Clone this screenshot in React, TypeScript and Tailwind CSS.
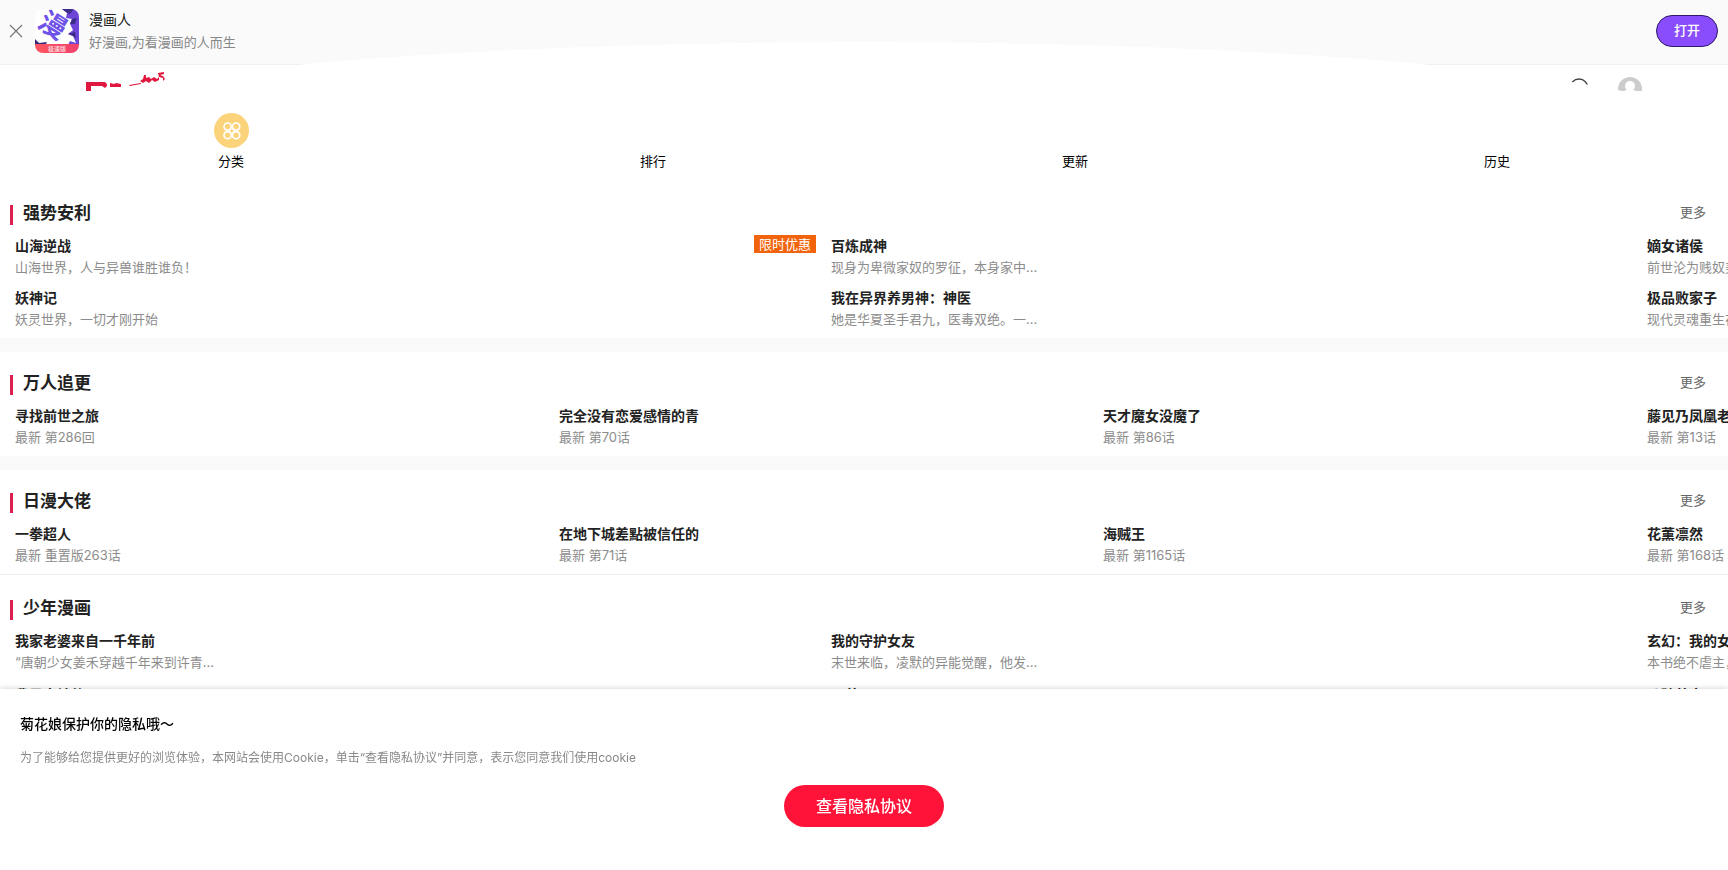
type Comic = { title: string; desc: string; badge?: string }
type Section = { name: string; comics: Comic[]; rows: 1 | 2; divider: 'thick' | 'thin' | 'none' }

const sections: Section[] = [
  {
    name: '强势安利',
    rows: 2,
    divider: 'thick',
    comics: [
      { title: '山海逆战', desc: '山海世界，人与异兽谁胜谁负！', badge: '限时优惠' },
      { title: '妖神记', desc: '妖灵世界，一切才刚开始' },
      { title: '百炼成神', desc: '现身为卑微家奴的罗征，本身家中...' },
      { title: '我在异界养男神：神医', desc: '她是华夏圣手君九，医毒双绝。一...' },
      { title: '嫡女诸侯', desc: '前世沦为贱奴美人' },
      { title: '极品败家子', desc: '现代灵魂重生在古代' },
    ],
  },
  {
    name: '万人追更',
    rows: 1,
    divider: 'thick',
    comics: [
      { title: '寻找前世之旅', desc: '最新 第286回' },
      { title: '完全没有恋爱感情的青', desc: '最新 第70话' },
      { title: '天才魔女没魔了', desc: '最新 第86话' },
      { title: '藤见乃凤凰老师', desc: '最新 第13话' },
    ],
  },
  {
    name: '日漫大佬',
    rows: 1,
    divider: 'thin',
    comics: [
      { title: '一拳超人', desc: '最新 重置版263话' },
      { title: '在地下城差點被信任的', desc: '最新 第71话' },
      { title: '海贼王', desc: '最新 第1165话' },
      { title: '花薰凛然', desc: '最新 第168话' },
    ],
  },
  {
    name: '少年漫画',
    rows: 2,
    divider: 'none',
    comics: [
      { title: '我家老婆来自一千年前', desc: '“唐朝少女姜禾穿越千年来到许青...' },
      { title: '我是大神仙', desc: '最新 第70话' },
      { title: '我的守护女友', desc: '末世来临，凌默的异能觉醒，他发...' },
      { title: '元尊', desc: '最新 第86话' },
      { title: '玄幻：我的女徒弟', desc: '本书绝不虐主，轻松' },
      { title: '斗破苍穹', desc: '最新 第13话' },
    ],
  },
]

const navItems = ['分类', '排行', '更新', '历史']

function AppIcon() {
  return (
    <svg viewBox="0 0 44 44" className="h-11 w-11 shrink-0">
      <defs>
        <clipPath id="app-clip"><rect width="44" height="44" rx="8" /></clipPath>
        <linearGradient id="app-strip" x1="0" x2="1">
          <stop offset="0" stopColor="#fb5660" />
          <stop offset="1" stopColor="#f0406e" />
        </linearGradient>
      </defs>
      <g clipPath="url(#app-clip)">
        <rect width="44" height="44" fill="#fff" />
        <path d="M27 0H44V36H33L35 32 41 34 38 27 33 25 38 21 35 15 37 10 31 9 32 4Z" fill="#6d45d8" />
        <path d="M27 0H39L35 5 31 3ZM33 25 40 23 41 29 38 27ZM37 10 42 9 40 15 35 15Z" fill="#3c2c85" />
        <path d="M0 30 4 34 12 33 10 37H0Z" fill="#37277b" />
        <text x="18" y="26" fontSize="27" fontWeight="700" fill="#6f52e8" textAnchor="middle" transform="rotate(32 18 16)">漫</text>
        <rect y="35" width="44" height="9" fill="url(#app-strip)" />
        <text x="22" y="42" fontSize="6" fontWeight="500" fill="#ffe3e6" textAnchor="middle">极速版</text>
      </g>
    </svg>
  )
}

function SiteLogo() {
  return (
    <svg viewBox="0 0 80 26" className="h-[26px] w-20" fill="#e0183f">
      <path d="M0 11H18Q21 11 21 15L19 17 16 15H5V20H0ZM24 12 28 13 30 12 35 13V16H24Z" />
      <path d="M43 14 55 12 55 13 44 15Z" />
      <path d="M54 10 57 8 58 4 60 4 60 7 63 6 65 8 68 6 71 8 73 6 73 9 69 11 66 9 63 12 60 10 57 12Z" />
      <path d="M72 2 78 1 78 3 74 4 77 5 79 8 77 10 77 7 73 6Z" />
    </svg>
  )
}

function CategoryIcon() {
  return (
    <svg viewBox="0 0 36 36" className="h-full w-full">
      <circle cx="18" cy="18" r="18" fill="#fbd37a" />
      <g fill="none" stroke="#fff" strokeWidth="1.7">
        <circle cx="14" cy="14" r="3.7" />
        <circle cx="22.8" cy="14" r="3.7" />
        <circle cx="14" cy="22.8" r="3.7" />
        <circle cx="22.8" cy="22.8" r="3.7" />
        <path d="M18.4 15.8 21 18.4 18.4 21 15.8 18.4Z" strokeWidth="1" />
      </g>
    </svg>
  )
}

function AppBanner() {
  return (
    <div className="flex h-[65px] items-center border-b border-[#f0f0f0] bg-[#fafafa] px-2.5 pb-0.5">
      <button aria-label="关闭" className="mr-[13px] w-3">
        <svg viewBox="0 0 12 12" className="h-3 w-3 overflow-visible" stroke="#777" strokeWidth="1.2">
          <path d="M0 0 12 12M12 0 0 12" />
        </svg>
      </button>
      <AppIcon />
      <div className="ml-2.5 flex-1 leading-[23px]">
        <p className="text-sm leading-[23px] text-[#222]">漫画人</p>
        <p className="text-[13px] text-[#888]">好漫画,为看漫画的人而生</p>
      </div>
      <button className="h-8 w-[62px] rounded-full border border-[#301a66] bg-[#8a4dfd] text-[13px] font-medium text-white">
        打开
      </button>
    </div>
  )
}

function Header() {
  return (
    <header className="h-12 px-[5%]">
      <div className="flex h-[26px] items-start justify-between overflow-hidden pt-1.5">
        <a href="#" aria-label="首页"><SiteLogo /></a>
        <div className="flex gap-7 pt-1.5">
          <a href="#" aria-label="搜索">
            <svg viewBox="0 0 24 24" className="h-6 w-6" fill="none" stroke="#444" strokeWidth="1.4">
              <circle cx="13" cy="11" r="9" />
              <path d="M19 18 24 23" />
            </svg>
          </a>
          <a href="#" aria-label="我的">
            <svg viewBox="0 0 24 24" className="h-6 w-6">
              <circle cx="12" cy="12" r="12" fill="#ccc" />
              <circle cx="12" cy="9" r="5" fill="#fff" />
              <path d="M4 20Q5 12 12 12T20 20Z" fill="#fff" />
            </svg>
          </a>
        </div>
      </div>
    </header>
  )
}

function Nav() {
  return (
    <nav className="relative">
      {/* curved white cap that rises over the header */}
      <div className="absolute inset-x-0 -top-[71px] h-[94px] rounded-[50%_50%_0_0/100%_100%_0_0] bg-white" />
      <ul className="relative grid grid-cols-4 px-5 pb-[11px]">
        {navItems.map((label, i) => (
          <li key={label}>
            <a href="#" className="flex flex-col items-center gap-[3px] text-[13px] leading-5 text-black">
              <span className="h-[35px] w-[35px]">{i === 0 && <CategoryIcon />}</span>
              {label}
            </a>
          </li>
        ))}
      </ul>
    </nav>
  )
}

function ComicSection({ section }: { section: Section }) {
  const layout = section.rows === 2
    ? 'grid-rows-2 auto-cols-[calc((100%-111px)/2)]'
    : 'grid-rows-1 auto-cols-[calc((100%-126px)/3)]'
  const rowGap = section.divider === 'none' ? 'gap-y-3' : 'gap-y-2.5'

  return (
    <section>
      <div className="flex h-[46px] items-center justify-between pt-4 pr-[22px] pl-2.5">
        <div className="flex items-center gap-2.5">
          <span className="mt-1 h-5 w-[3px] bg-[#dc1f4e]" />
          <h2 className="text-[17px] leading-[30px] font-bold text-[#222]">{section.name}</h2>
        </div>
        <a href="#" className="pb-0.5 text-[13px] leading-5 text-[#666]">更多</a>
      </div>
      <ul className={`grid grid-flow-col gap-x-[15px] overflow-hidden py-2 pl-[15px] ${rowGap} ${layout}`}>
        {section.comics.map((c) => (
          <li key={c.title} className="relative whitespace-nowrap">
            <a href="#" className="block">
              <h3 className="text-sm leading-5 font-bold text-[#222]">{c.title}</h3>
              <p className="text-[13px] leading-[22px] text-[#8c8c8c]">{c.desc}</p>
            </a>
            {c.badge && (
              <span className="absolute -top-px right-0 bg-[#f2640c] px-[5px] text-[13px] leading-[18px] text-white">
                {c.badge}
              </span>
            )}
          </li>
        ))}
      </ul>
      {section.divider === 'thick' && <div className="h-3.5 bg-[#f9f9f9]" />}
      {section.divider === 'thin' && <div className="h-[3px] border-t border-[#eee]" />}
    </section>
  )
}

function PrivacyPanel() {
  return (
    <div className="fixed inset-x-0 bottom-0 bg-white px-5 pt-6 pb-[43px] shadow-[0_0_6px_rgba(0,0,0,0.2)]">
      <h2 className="text-sm leading-[22px] font-medium text-black">菊花娘保护你的隐私哦～</h2>
      <p className="mt-[13px] text-xs leading-5 text-[#888]">
        为了能够给您提供更好的浏览体验，本网站会使用Cookie，单击“查看隐私协议”并同意，表示您同意我们使用cookie
      </p>
      <button className="mx-auto mt-[17px] block h-[42px] w-40 rounded-full bg-[#ff1338] text-base font-medium text-white">
        查看隐私协议
      </button>
    </div>
  )
}

export default function App() {
  return (
    <div lang="zh-CN" className="h-screen overflow-hidden bg-white font-['Inter','Noto_Sans_CJK_SC',sans-serif]">
      <AppBanner />
      <Header />
      <Nav />
      <main>
        {sections.map((s) => (
          <ComicSection key={s.name} section={s} />
        ))}
      </main>
      <PrivacyPanel />
    </div>
  )
}
